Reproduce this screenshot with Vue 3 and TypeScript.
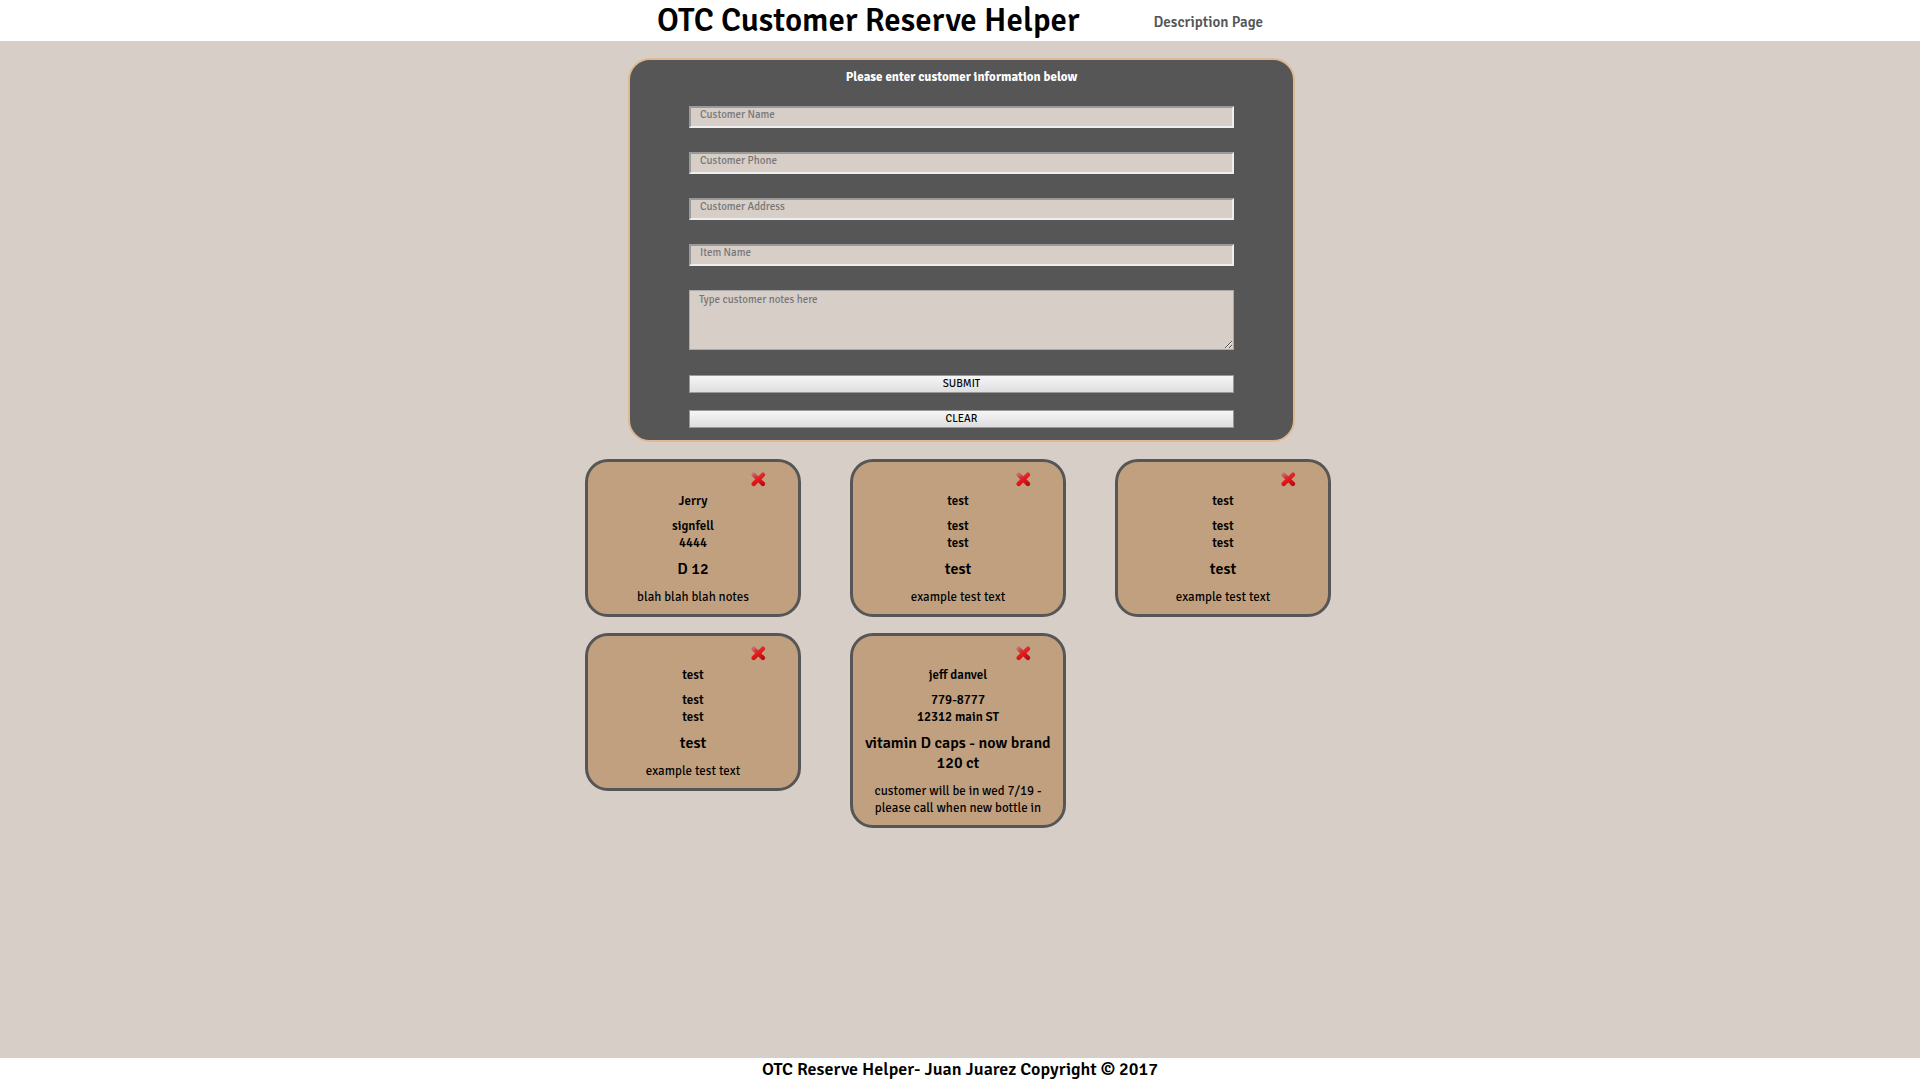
<script setup lang="ts">
import { ref, reactive } from 'vue'

interface Reservation {
  id: number
  name: string
  phone: string
  address: string
  item: string
  notes: string
}

const reservations = ref<Reservation[]>([
  { id: 1, name: 'Jerry', phone: 'signfell', address: '4444', item: 'D 12', notes: 'blah blah blah notes' },
  { id: 2, name: 'test', phone: 'test', address: 'test', item: 'test', notes: 'example test text' },
  { id: 3, name: 'test', phone: 'test', address: 'test', item: 'test', notes: 'example test text' },
  { id: 4, name: 'test', phone: 'test', address: 'test', item: 'test', notes: 'example test text' },
  {
    id: 5,
    name: 'jeff danvel',
    phone: '779-8777',
    address: '12312 main ST',
    item: 'vitamin D caps - now brand 120 ct',
    notes: 'customer will be in wed 7/19 - please call when new bottle in',
  },
])

const form = reactive({ name: '', phone: '', address: '', item: '', notes: '' })

function clear() {
  Object.assign(form, { name: '', phone: '', address: '', item: '', notes: '' })
}

function submit() {
  reservations.value.push({ id: Date.now(), ...form })
  clear()
}

function remove(id: number) {
  reservations.value = reservations.value.filter((r) => r.id !== id)
}
</script>

<template>
  <div class="page">
    <header class="header">
      <h1>OTC Customer Reserve Helper</h1>
      <a href="#description">Description Page</a>
    </header>

    <main>
      <form class="entry" @submit.prevent="submit">
        <h2>Please enter customer information below</h2>
        <div class="fields">
          <input v-model="form.name" type="text" placeholder="Customer Name" aria-label="Customer Name" />
          <input v-model="form.phone" type="text" placeholder="Customer Phone" aria-label="Customer Phone" />
          <input v-model="form.address" type="text" placeholder="Customer Address" aria-label="Customer Address" />
          <input v-model="form.item" type="text" placeholder="Item Name" aria-label="Item Name" />
          <textarea v-model="form.notes" placeholder="Type customer notes here" aria-label="Customer notes"></textarea>
        </div>
        <div class="actions">
          <button type="submit">SUBMIT</button>
          <button type="button" @click="clear">CLEAR</button>
        </div>
      </form>

      <section class="cards">
        <article v-for="r in reservations" :key="r.id" class="card">
          <button class="remove" type="button" aria-label="Remove" @click="remove(r.id)">
            <svg viewBox="0 0 16 16" width="16" height="16" aria-hidden="true">
              <defs>
                <linearGradient :id="`cross-${r.id}`" gradientUnits="userSpaceOnUse" x1="3" y1="1" x2="11" y2="15">
                  <stop offset="0" stop-color="#cf7f78" />
                  <stop offset="0.35" stop-color="#c63c40" />
                  <stop offset="0.5" stop-color="#ea1c1e" />
                  <stop offset="0.7" stop-color="#d81418" />
                  <stop offset="1" stop-color="#b40c14" />
                </linearGradient>
              </defs>
              <path
                d="M3.7 3.7 12.9 12.9M12.9 3.7 3.7 12.9"
                fill="none"
                :stroke="`url(#cross-${r.id})`"
                stroke-width="4.4"
                stroke-linecap="round"
              />
            </svg>
          </button>
          <h3>{{ r.name }}</h3>
          <div class="contact">
            <p>{{ r.phone }}</p>
            <p>{{ r.address }}</p>
          </div>
          <h4>{{ r.item }}</h4>
          <p class="notes">{{ r.notes }}</p>
        </article>
      </section>
    </main>

    <footer class="footer">OTC Reserve Helper- Juan Juarez Copyright © 2017</footer>
  </div>
</template>

<style>
body {
  margin: 0;
  background: #d7cec8;
}
</style>

<style scoped>
.page,
.page input,
.page textarea,
.page button {
  font-family: "Signika Negative", Signika, Lato, sans-serif;
}

.page {
  display: flex;
  flex-direction: column;
  min-height: 100vh;
  color: #000;
}

h1, h2, h3, h4, p {
  margin: 0;
}

.header {
  display: flex;
  justify-content: center;
  align-items: center;
  gap: 74px;
  background: #fff;
}

h1 {
  font-size: 33px;
  line-height: 41px;
  font-weight: 600;
}

.header a {
  padding-top: 3px;
  font-size: 15px;
  line-height: 18px;
  font-weight: 600;
  color: #565656;
  text-decoration: none;
}

main {
  flex: 1;
  display: flex;
  flex-direction: column;
  align-items: center;
  gap: 17px;
  padding: 17px 0 17px 3px;
}

.entry {
  box-sizing: border-box;
  width: 100%;
  max-width: 667px;
  padding: 9px 59px 12px;
  border: 2px solid #dcb893;
  border-radius: 22px;
  background: #565656;
}

h2 {
  margin-bottom: 20px;
  font-size: 13px;
  line-height: 17px;
  font-weight: 700;
  text-align: center;
  color: #fff;
}

.fields {
  display: flex;
  flex-direction: column;
  gap: 24px;
}

.fields input,
.fields textarea {
  box-sizing: border-box;
  width: 100%;
  margin: 0;
  border-radius: 0;
  background: #d7cec8;
  color: #000;
  font-size: 11px;
  line-height: 14px;
}

.fields input {
  height: 22px;
  padding: 0 9px 6px;
  border: 2px solid;
  border-color: #9a9a9a #eee #eee #9a9a9a;
}

.fields textarea {
  display: block;
  height: 60px;
  padding: 2px 9px;
  border: 1px solid #a9a9a9;
  resize: both;
}

.fields ::placeholder {
  color: #757575;
  opacity: 1;
}

.actions {
  display: flex;
  flex-direction: column;
  gap: 17px;
  margin-top: 25px;
}

.actions button {
  height: 18px;
  padding: 0;
  border: 1px solid #999;
  border-radius: 0;
  background: linear-gradient(#f6f6f6, #dedede);
  color: #000;
  font-size: 11px;
  line-height: 16px;
}

.cards {
  display: grid;
  grid-template-columns: repeat(auto-fit, 216px);
  align-items: start;
  gap: 16px 49px;
  width: 100%;
  max-width: 753px;
}

.card {
  display: flex;
  flex-direction: column;
  box-sizing: border-box;
  padding: 9px 10px 8px;
  border: 3px solid #565656;
  border-radius: 23px;
  background: #c1a07f;
  text-align: center;
}

.remove {
  align-self: flex-end;
  display: flex;
  margin: 0 22px 6px 0;
  padding: 0;
  border: 0;
  background: none;
  cursor: pointer;
}

h3,
.contact,
.notes {
  font-size: 13px;
  line-height: 17px;
}

h3,
.contact {
  font-weight: 600;
}

.contact {
  margin: 8px 0 7px;
}

h4 {
  font-size: 16px;
  line-height: 20px;
  font-weight: 600;
}

.notes {
  margin-top: 10px;
}

.footer {
  background: #fff;
  font-size: 18px;
  line-height: 22px;
  font-weight: 600;
  text-align: center;
}
</style>
